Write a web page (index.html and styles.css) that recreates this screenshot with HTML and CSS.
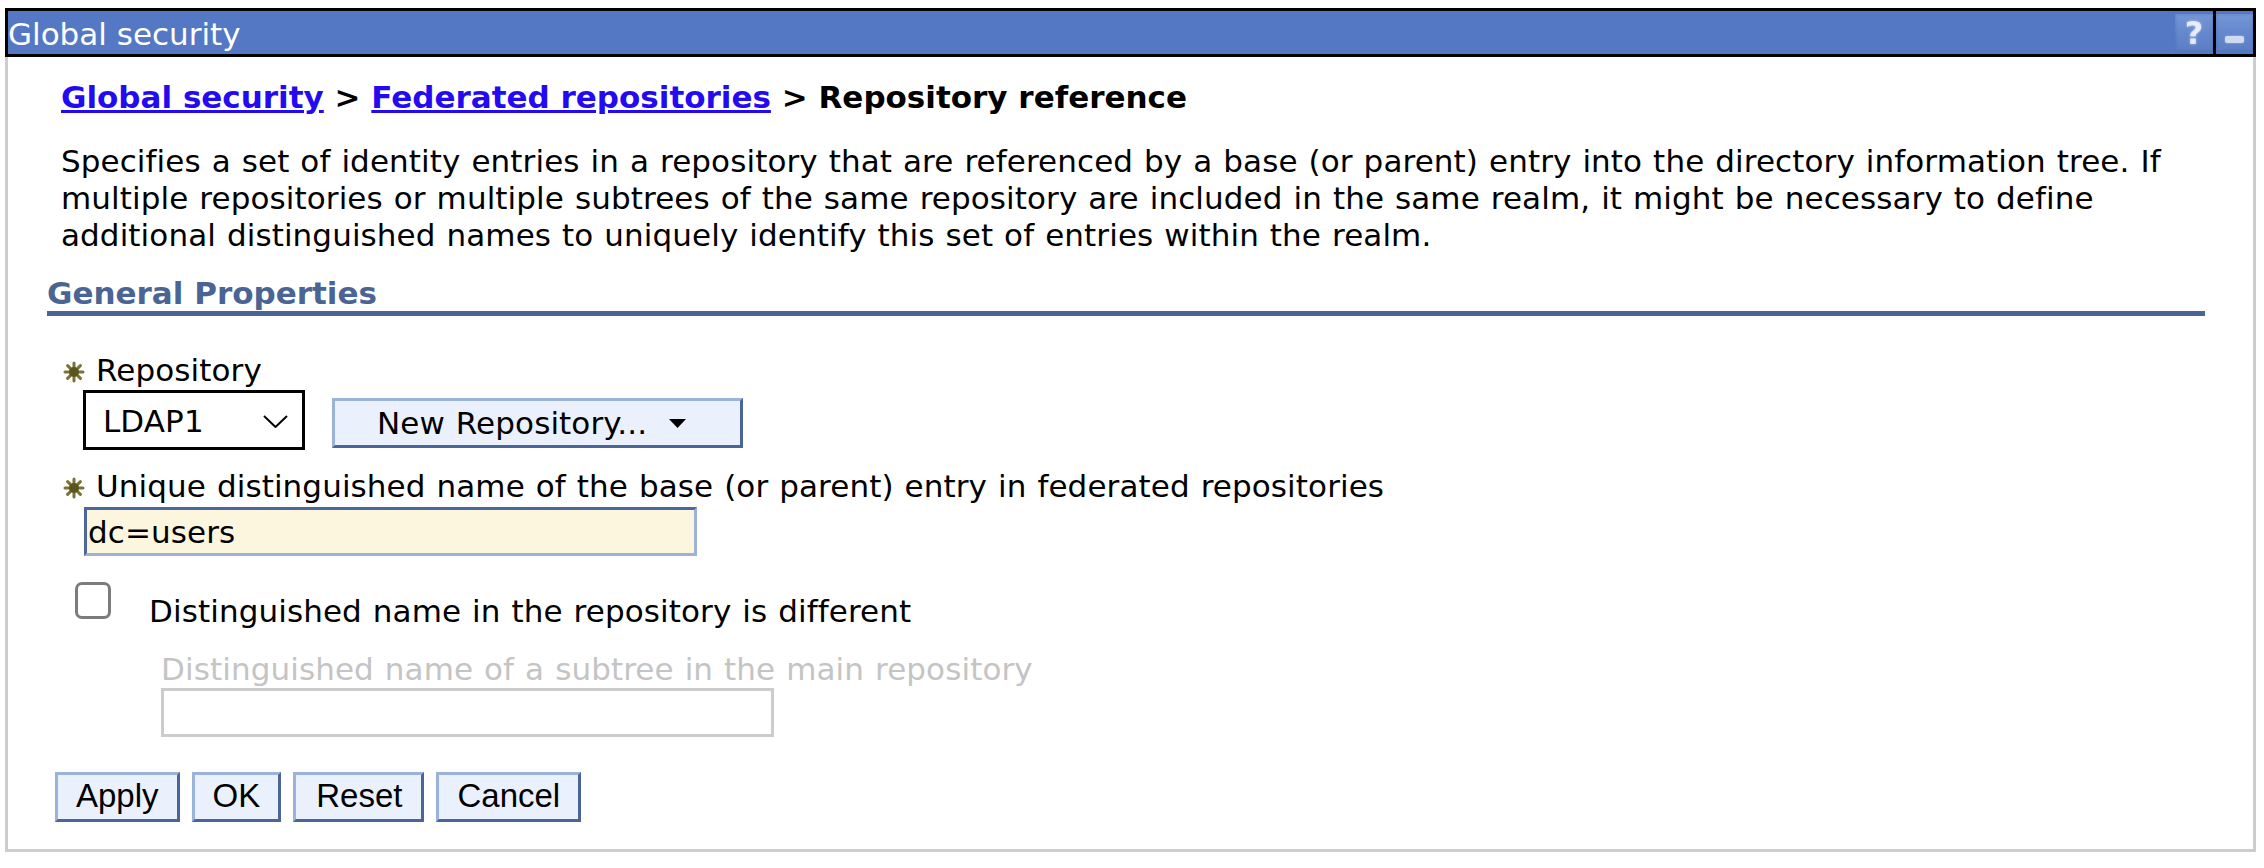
FILE: index.html
```html
<!DOCTYPE html>
<html lang="en">
<head>
<meta charset="utf-8">
<title>Repository reference</title>
<link rel="stylesheet" href="styles.css">
</head>
<body>
<div class="portlet">
  <div class="titlebar">
    <span class="title">Global security</span>
    <span class="tb-btn tb-help">?</span>
    <span class="tb-sep"></span>
    <span class="tb-btn tb-min"><span class="min-bar"></span></span>
  </div>
  <div class="content">
    <div class="breadcrumb"><a href="#">Global security</a> &gt; <a href="#">Federated repositories</a> &gt; Repository reference</div>
    <p class="desc wide">Specifies a set of identity entries in a repository that are referenced by a base (or parent) entry into the directory information tree. If multiple repositories or multiple subtrees of the same repository are included in the same realm, it might be necessary to define additional distinguished names to uniquely identify this set of entries within the realm.</p>
    <h2 class="section">General Properties</h2>

    <div class="label-row label-first">
      <svg class="req" width="22" height="22" viewBox="0 0 22 22" aria-hidden="true">
        <g stroke="#7a7236" stroke-width="3" stroke-linecap="round">
          <line x1="11" y1="2" x2="11" y2="20"/>
          <line x1="2" y1="11" x2="20" y2="11"/>
          <line x1="4.6" y1="4.6" x2="17.4" y2="17.4"/>
          <line x1="17.4" y1="4.6" x2="4.6" y2="17.4"/>
        </g>
        <circle cx="11" cy="11" r="5" fill="#5b5420"/>
      </svg>
      <span class="label wide">Repository</span>
    </div>
    <div class="control-row">
      <div class="select">
        <span class="wide">LDAP1</span>
        <svg width="25" height="13" viewBox="0 0 25 13" aria-hidden="true"><polyline points="1,1 12.5,12 24,1" fill="none" stroke="#000" stroke-width="2"/></svg>
      </div>
      <button class="btn menu-btn" type="button"><span class="wide">New Repository...</span><svg class="tri" width="17" height="9" viewBox="0 0 17 9" aria-hidden="true"><polygon points="0,0 17,0 8.5,9" fill="#000"/></svg></button>
    </div>

    <div class="label-row label-second">
      <svg class="req" width="22" height="22" viewBox="0 0 22 22" aria-hidden="true">
        <g stroke="#7a7236" stroke-width="3" stroke-linecap="round">
          <line x1="11" y1="2" x2="11" y2="20"/>
          <line x1="2" y1="11" x2="20" y2="11"/>
          <line x1="4.6" y1="4.6" x2="17.4" y2="17.4"/>
          <line x1="17.4" y1="4.6" x2="4.6" y2="17.4"/>
        </g>
        <circle cx="11" cy="11" r="5" fill="#5b5420"/>
      </svg>
      <span class="label wide">Unique distinguished name of the base (or parent) entry in federated repositories</span>
    </div>
    <input class="text-input wide" type="text" value="dc=users">

    <div class="check-row">
      <input class="cb" type="checkbox">
      <span class="check-label wide">Distinguished name in the repository is different</span>
    </div>
    <div class="sub-field">
      <div class="sub-label wide">Distinguished name of a subtree in the main repository</div>
      <input class="text-input disabled-input" type="text" disabled>
    </div>

    <div class="actions">
      <button class="btn action" type="button">Apply</button>
      <button class="btn action" type="button">OK</button>
      <button class="btn action action-reset" type="button">Reset</button>
      <button class="btn action" type="button">Cancel</button>
    </div>
  </div>
</div>
</body>
</html>
```
FILE: styles.css
```css
html, body {
  margin: 0;
  padding: 0;
  background: #ffffff;
}

body {
  font-family: "DejaVu Sans", Verdana, sans-serif;
  font-size: 31px;
  line-height: 37px;
  color: #000;
}

/* Verdana-like spacing for regular-weight text */
.wide {
  letter-spacing: 0.1px;
  word-spacing: 1px;
}

.portlet {
  margin: 8px 0 0 5px;
  width: 2251px;
}

/* Title bar */
.titlebar {
  display: flex;
  height: 43px;
  border: 3px solid #000;
  background: #5478c4;
}

.title {
  flex: 1;
  color: #fff;
  line-height: 40px;
  padding-top: 3px;
  white-space: nowrap;
}

.tb-btn {
  margin-top: 3px;
  height: 38px;
  background: linear-gradient(180deg, #7596d6 0%, #6587cd 50%, #5a7dc5 100%);
  box-shadow: inset 0 0 3px rgba(40, 70, 140, 0.35);
}

.tb-help {
  width: 38px;
  display: flex;
  justify-content: center;
  align-items: center;
  font-weight: bold;
  font-size: 32px;
  line-height: 38px;
  color: rgba(255, 255, 255, 0.7);
  text-shadow: 0 0 3px rgba(255, 255, 255, 0.55);
  filter: blur(0.4px);
}

.tb-sep {
  width: 3px;
  background: #000;
}

.tb-min {
  width: 37px;
  display: flex;
  justify-content: center;
}

.min-bar {
  margin-top: 22px;
  width: 19px;
  height: 7px;
  border-radius: 2px;
  background: rgba(255, 255, 255, 0.7);
  box-shadow: 0 0 2px rgba(255, 255, 255, 0.5);
}

/* Content */
.content {
  border: 3px solid #cdcdcd;
  border-top: 0;
  padding: 22px 48px 27px 39px;
}

.breadcrumb {
  margin-left: 14px;
  font-weight: bold;
  white-space: nowrap;
}

.breadcrumb a {
  color: #230af0;
  text-decoration: underline;
}

.desc {
  margin: 27px 0 0 14px;
}

.section {
  margin: 22px 0 0 0;
  font-size: 31px;
  line-height: 35px;
  font-weight: bold;
  color: #4a6494;
  border-bottom: 5px solid #4a6494;
}

.label-row {
  display: flex;
  align-items: center;
  padding-left: 16px;
}

.label-first {
  margin-top: 36px;
}

.label-second {
  margin-top: 18px;
}

.req {
  flex: none;
  margin-right: 11px;
  position: relative;
  top: 1px;
}

.control-row {
  display: flex;
  align-items: flex-start;
  margin-top: 1px;
  padding-left: 36px;
}

.select {
  box-sizing: border-box;
  width: 222px;
  height: 60px;
  border: 3px solid #000;
  display: flex;
  align-items: center;
  justify-content: space-between;
  padding: 3px 14px 0 17px;
  background: #fff;
}

.btn {
  font-family: "DejaVu Sans", Verdana, sans-serif;
  font-size: 31px;
  color: #000;
  background: #eaf1fc;
  border-style: solid;
  border-width: 3px;
  border-color: #9cb3d9 #4a6597 #4a6597 #9cb3d9;
  margin: 0;
  cursor: pointer;
}

.menu-btn {
  box-sizing: border-box;
  margin: 8px 0 0 27px;
  width: 411px;
  height: 50px;
  display: flex;
  align-items: flex-start;
  padding: 4px 0 0 42px;
  line-height: 37px;
}

.tri {
  flex: none;
  margin: 14px 0 0 22px;
}

.text-input {
  display: block;
  box-sizing: border-box;
  width: 613px;
  height: 49px;
  margin: 2px 0 0 37px;
  padding: 0 0 0 1px;
  border-style: solid;
  border-width: 3px;
  border-color: #4d6898 #9cb2d6 #9cb2d6 #4d6898;
  background: #fdf6df;
  font-family: "DejaVu Sans", Verdana, sans-serif;
  font-size: 31px;
  color: #000;
  outline: none;
}

.check-row {
  display: flex;
  align-items: flex-start;
  margin-top: 26px;
  padding-left: 28px;
}

.cb {
  appearance: none;
  -webkit-appearance: none;
  box-sizing: border-box;
  width: 36px;
  height: 37px;
  margin: 0;
  border: 3px solid #7c7c7c;
  border-radius: 7px;
  background: #fff;
}

.check-label {
  margin: 11px 0 0 38px;
}

.sub-field {
  margin-top: 21px;
  padding-left: 114px;
}

.sub-label {
  color: #c4c4c4;
}

.disabled-input {
  margin: 0;
  border-color: #cccccc;
  background: #fff;
}

.actions {
  display: flex;
  gap: 12px;
  margin-top: 35px;
  padding-left: 8px;
}

.action {
  font-family: "Liberation Sans", Arial, sans-serif;
  font-size: 33px;
  line-height: 41px;
  padding: 0 18px 3px;
}

.action-reset {
  padding: 0 19px 3px 20px;
}
```
